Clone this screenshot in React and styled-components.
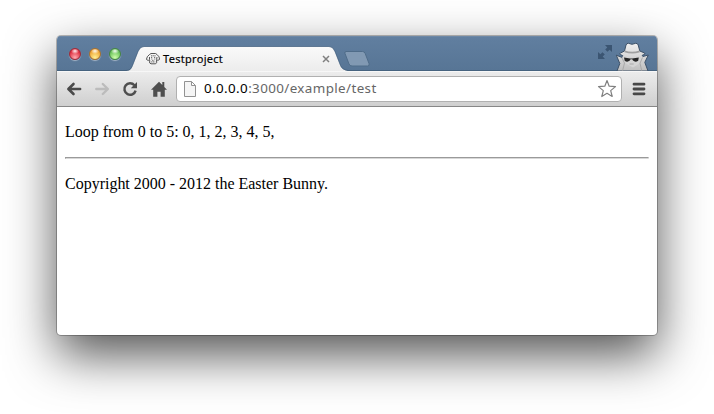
import React from "react";
import styled, { createGlobalStyle } from "styled-components";

const Global = createGlobalStyle`
  * { box-sizing: border-box; }
  html, body { margin: 0; background: #fff; overflow: hidden; }
  svg { display: block; flex: none; }
`;
const Desktop = styled.div`
  width: 714px;
  height: 414px;
  padding: 36px 57px 79px;
  overflow: hidden;
`;
const Window = styled.div`
  display: flex;
  flex-direction: column;
  width: 600px;
  height: 299px;
  border-radius: 4px;
  overflow: hidden;
  background: #fff;
  box-shadow: 0 0 0 1px rgba(0, 0, 0, 0.25), 0 20px 50px rgba(0, 0, 0, 0.68);
`;
const TitleBar = styled.header`
  display: flex;
  align-items: flex-start;
  height: 35px;
  flex: none;
  background: linear-gradient(#617fa0, #577595);
  box-shadow: inset 0 1px #6d88a6, inset 0 -1px #46637f;
`;
const Lights = styled.div`
  display: flex;
  gap: 8px;
  padding: 12px 0 0 12px;
  width: 69px;
`;
const Light = styled.i`
  width: 12px;
  height: 12px;
  flex: none;
  border-radius: 50%;
  border: 1px solid ${(p) => p.$edge};
  background:
    radial-gradient(ellipse 4px 3px at 50% 20%, rgba(255, 255, 255, 0.95), transparent),
    radial-gradient(circle at 50% 85%, ${(p) => p.$glow}, ${(p) => p.$base} 75%);
  box-shadow: 0 1px 1px rgba(255, 255, 255, 0.45);
`;
const Tab = styled.div`
  position: relative;
  display: flex;
  align-items: center;
  width: 224px;
  height: 25px;
  margin-top: 10px;
  padding: 0 20px 0 20px;
`;
const TabShape = styled.svg`
  position: absolute;
  left: 0;
  top: 0;
`;
const TabTitle = styled.span`
  position: relative;
  flex: 1;
  margin-left: 3px;
  font: 11px/14px "Noto Sans", sans-serif;
  letter-spacing: 0.3px;
  color: #000;
  -webkit-text-stroke: 0.15px #000;
`;
const OverSvg = styled.svg`
  position: relative;
`;
const NewTab = styled.svg`
  margin: 14px 0 0 -7px;
`;
const Corner = styled.div`
  display: flex;
  gap: 2px;
  margin: 6px 6px 0 auto;
`;
const Fullscreen = styled.svg`
  margin-top: 2px;
`;
const Toolbar = styled.nav`
  display: flex;
  align-items: center;
  height: 36px;
  flex: none;
  padding: 0 9px 0 9px;
  background: linear-gradient(#ececec, #cfcfcf);
  border-top: 1px solid #f7f7f7;
  border-bottom: 1px solid #878787;
`;
const NavIcons = styled.div`
  display: flex;
  gap: 12px;
  width: 110px;
  padding-bottom: 1px;
`;
const Address = styled.div`
  display: flex;
  align-items: center;
  width: 446px;
  height: 26px;
  padding: 0 4px 0 7px;
  border: 1px solid #b0b0b0;
  border-radius: 4px;
  background: #fff;
`;
const Url = styled.span`
  flex: 1;
  margin: 0 0 2px 8px;
  font: 13.4px/18px "Noto Sans", sans-serif;
  letter-spacing: 0.39px;
  color: #666;
  white-space: nowrap;
`;
const Host = styled.span`
  color: #000;
`;
const MenuIcon = styled.svg`
  margin-left: 10px;
  margin-bottom: 1px;
`;
const Page = styled.main`
  flex: 1;
  padding: 0 8px;
  font: 16px/18px "Liberation Serif", serif;
  color: #000;
`;
const Paragraph = styled.p`
  margin: 16px 0;
  letter-spacing: -0.01px;
`;
const Rule = styled.hr`
  height: 2px;
  margin: 0;
  border: 1px solid;
  border-color: #9a9a9a #eee #d8d8d8 #9a9a9a;
`;

function BackArrow() {
  return (
    <svg width="16" height="16" viewBox="0 0 16 16" fill="none" stroke="#4a4a4a" strokeWidth="2.6" strokeLinecap="round" strokeLinejoin="round">
      <path d="M7.5 3 2.4 8l5.1 5M2.8 8h11.3" />
    </svg>
  );
}
function ForwardArrow() {
  return (
    <svg width="16" height="16" viewBox="0 0 16 16" fill="none" stroke="#bcbcbc" strokeWidth="2.4" strokeLinecap="round" strokeLinejoin="round">
      <path d="M8.8 3l5.1 5-5.1 5M13.5 8H2.3" />
    </svg>
  );
}
function ReloadIcon() {
  return (
    <svg width="16" height="16" viewBox="0 0 16 16">
      <path d="M12.4 4.3A5.7 5.7 0 1 0 13.6 9.6" fill="none" stroke="#4e4e4e" strokeWidth="2.5" />
      <path d="M15 1v6.2H8.8z" fill="#4e4e4e" />
    </svg>
  );
}
function HomeIcon() {
  return (
    <svg width="17" height="16" viewBox="-1 0 17 16" fill="#4e4e4e">
      <path d="M8 .8 11.3 4V1h2v4.9L16 8.8h-2.2v6.9H9.6v-5H6.4v5H2.2V8.8H0z" />
    </svg>
  );
}
function DogIcon() {
  return (
    <OverSvg width="14" height="13" viewBox="0 0 14 13" fill="none" stroke="#444" strokeWidth=".9">
      <path d="M3.5 2.5 5 1.5h4.5L11 2.5l2 2.3.6 2.6-1.7 1-1.3-.9L11 5M3.5 2.5 1.4 4.6.4 7.4l1.8 1.1 1.3-.9V5M3.7 8v3l1.3.8h4.6l1-1V8" />
      <path d="M5 3.8h4.6M5 5.4h1.6M8 5.4h1.5M5.3 7h1M8.3 7h1M6.2 8.4h2M5.2 9.9h4" strokeWidth=".8" strokeDasharray="1.2 .5" />
    </OverSvg>
  );
}
function Incognito() {
  return (
    <svg width="36" height="29" viewBox="0 0 36 29">
      <defs>
        <linearGradient id="coat" x1="0" y1="0" x2="0" y2="1">
          <stop stopColor="#f0f0f0" />
          <stop offset="1" stopColor="#bebebe" />
        </linearGradient>
      </defs>
      <path d="M9.5 9 11 3Q11.6 1.2 13.5 1.3L17 2.3l3.7-1q2-.1 2.5 1.7l1.6 6 4.8 2q1 1-.6 1.6l-1.8.7.7 1.2 5.4-1.5-3.5 7.4L33 29H2l2.8-7.5L1.3 13.2 7 15.4l.7-1.8-2.4-1q-1.2-.9.2-1.6z" fill="url(#coat)" stroke="#3c5067" strokeWidth="1" />
      <path d="M9.7 8.5Q17 11 24.5 8.5l.4 1.7q-7.8 2.8-15.5 0z" fill="#a0a0a0" />
      <path d="M7.6 14Q17 16.1 27 14L25.8 20.5 18 25.5l-8.6-5z" fill="#d4d4d4" />
      <path d="M9 15.6l6.2 1h2l6.6-1-.6 3.2q-3 1.8-5.2-.2l-.8-1.3h-1.6l-.8 1.3q-2.4 2-5.1.2z" fill="#262626" />
      <path d="M6.8 15.7 9.5 21 7.5 29M27.5 15.5l-2.5 5.7 1.8 7.8M14.5 22h4.2" fill="none" stroke="#a0a0a0" strokeWidth=".8" />
    </svg>
  );
}

export default function App() {
  return (
    <>
      <Global />
      <Desktop>
        <Window>
          <TitleBar>
            <Lights>
              <Light $edge="#a02c39" $base="#db1e31" $glow="#ffabb0" />
              <Light $edge="#a8712f" $base="#ed9d2a" $glow="#fff094" />
              <Light $edge="#458644" $base="#5dba50" $glow="#ceffab" />
            </Lights>
            <Tab>
              <TabShape width="224" height="25" viewBox="0 0 224 25">
                <defs>
                  <linearGradient id="tab" x1="0" y1="0" x2="0" y2="1">
                    <stop stopColor="#fafafa" />
                    <stop offset="1" stopColor="#ececec" />
                  </linearGradient>
                </defs>
                <path d="M0 25C4 24.7 5 23.5 6.5 20L12 6Q14 .8 18 .8H203Q207 .8 209 6l5.5 14Q216 24 222 25z" fill="url(#tab)" />
                <path d="M0 24.5C4 24.2 5 23 6.5 19.5L12 5.5Q14 .5 18 .5H203Q207 .5 209 5.5l5.5 14Q216 23.5 222 24.5" fill="none" stroke="#3f5b78" strokeOpacity=".55" />
              </TabShape>
              <DogIcon />
              <TabTitle>Testproject</TabTitle>
              <OverSvg width="8" height="8" viewBox="0 0 8 8" stroke="#808080" strokeWidth="1.5">
                <path d="M1 1l6 6M7 1 1 7" />
              </OverSvg>
            </Tab>
            <NewTab width="28" height="18" viewBox="0 0 28 18">
              <path d="M3 1.5h16.5q2 0 2.7 2L26 13.5q.8 2.5-1.2 2.5H9q-2.2 0-3-2L2 3.5Q1.4 1.5 3 1.5z" fill="#8199b3" stroke="#4f6c89" />
            </NewTab>
            <Corner>
              <Fullscreen width="16" height="16" viewBox="0 0 16 16" fill="#3b5572">
                <path d="M8 1h7v7l-2.4-2.3-2.1 2.1-2.3-2.3 2.1-2.1zM1 8l2.4 2.3 2.1-2.1 2.3 2.3-2.1 2.1L8 15H1z" />
              </Fullscreen>
              <Incognito />
            </Corner>
          </TitleBar>
          <Toolbar>
            <NavIcons>
              <BackArrow />
              <ForwardArrow />
              <ReloadIcon />
              <HomeIcon />
            </NavIcons>
            <Address>
              <svg width="12" height="16" viewBox="0 0 12 16" fill="#f5f5f5" stroke="#929292">
                <path d="M.5.5h7l4 4v11H.5zM7.5.5v4h4" />
              </svg>
              <Url><Host>0.0.0.0</Host>:3000/example/test</Url>
              <svg width="20" height="20" viewBox="0 0 20 20" fill="#fff" stroke="#808080" strokeWidth="1.2" strokeLinejoin="round">
                <path d="m10 1.5 2.2 5.7 6.3.4-4.8 4 1.5 5.9L10 14.3l-5.2 3.2 1.5-5.9-4.8-4 6.3-.4z" />
              </svg>
            </Address>
            <MenuIcon width="14" height="14" viewBox="0 0 14 14" stroke="#484848" strokeWidth="2.8" strokeLinecap="round">
              <path d="M2 2.2h10M2 7h10M2 11.8h10" />
            </MenuIcon>
          </Toolbar>
          <Page>
            <Paragraph>Loop from 0 to 5: 0, 1, 2, 3, 4, 5,</Paragraph>
            <Rule />
            <Paragraph>Copyright 2000 - 2012 the Easter Bunny.</Paragraph>
          </Page>
        </Window>
      </Desktop>
    </>
  );
}
